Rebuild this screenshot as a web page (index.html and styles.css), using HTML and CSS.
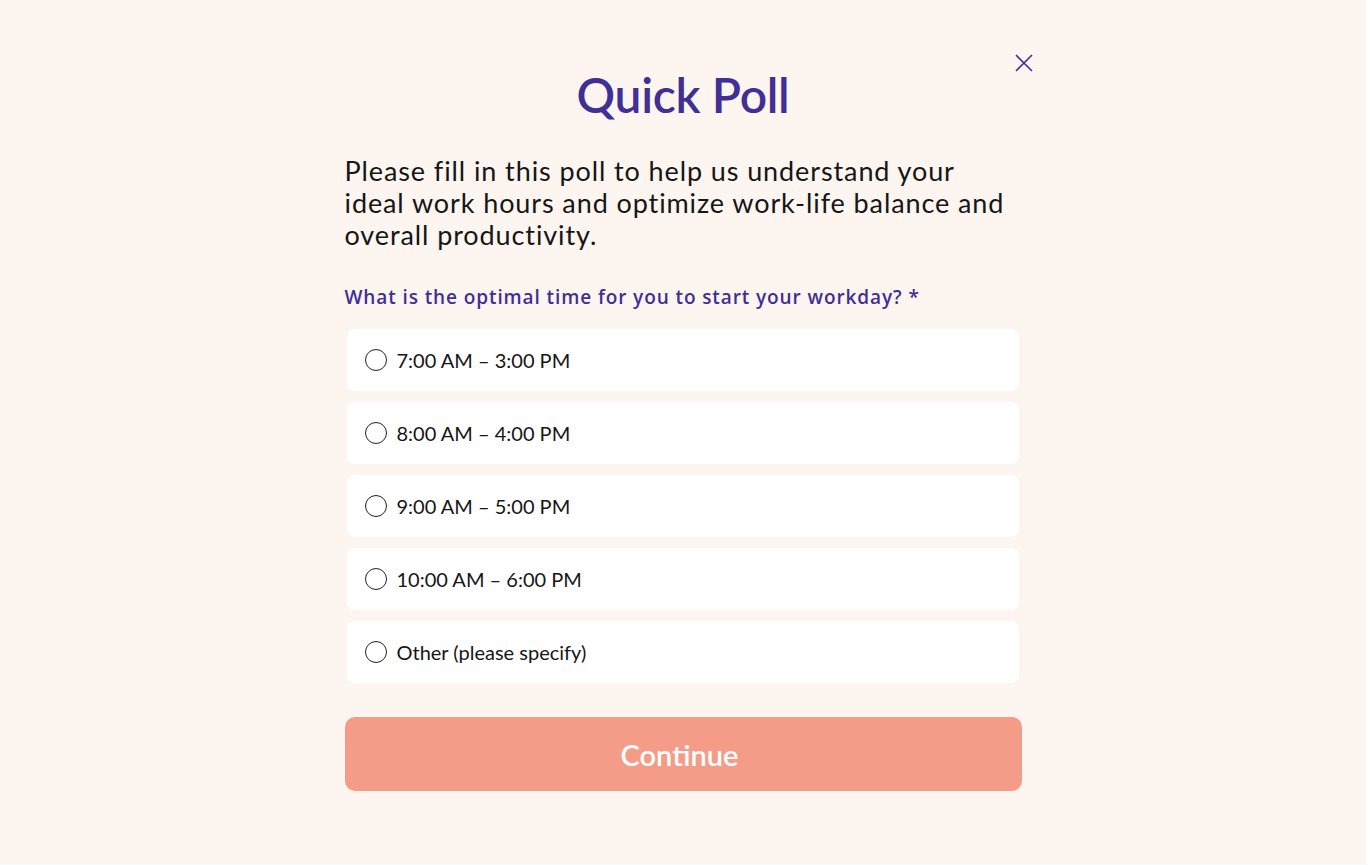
FILE: index.html
```html
<!DOCTYPE html>
<html lang="en">

<head>
    <meta charset="UTF-8">
    <meta name="viewport" content="width=device-width, initial-scale=1.0">
    <title>Quick Poll</title>
    <link rel="stylesheet" href="styles.css">
</head>

<body>
    <div class="poll_main">
        <button type="button" class="poll_close" aria-label="Close">
            <svg width="18" height="18" viewBox="0 0 18 18">
                <path d="M1 1L17 17M17 1L1 17" stroke="#3f2f96" stroke-width="1.6" fill="none" />
            </svg>
        </button>

        <h1>Quick Poll</h1>

        <p class="poll_intro">
            Please fill in this poll to help us understand your
            ideal work hours and optimize work-life balance and
            overall productivity.
        </p>

        <form class="poll_form">
            <h2>What is the optimal time for you to start your workday? *</h2>

            <label class="poll_option">
                <input type="radio" name="start" value="7">
                <span class="radio_circle"></span>
                <span>7:00 AM – 3:00 PM</span>
            </label>
            <label class="poll_option">
                <input type="radio" name="start" value="8">
                <span class="radio_circle"></span>
                <span>8:00 AM – 4:00 PM</span>
            </label>
            <label class="poll_option">
                <input type="radio" name="start" value="9">
                <span class="radio_circle"></span>
                <span>9:00 AM – 5:00 PM</span>
            </label>
            <label class="poll_option">
                <input type="radio" name="start" value="10">
                <span class="radio_circle"></span>
                <span>10:00 AM – 6:00 PM</span>
            </label>
            <label class="poll_option">
                <input type="radio" name="start" value="other">
                <span class="radio_circle"></span>
                <span>Other (please specify)</span>
            </label>

            <button type="button" class="poll_continue">Continue</button>
        </form>
    </div>
</body>

</html>
```

FILE: styles.css
```css
/* 기본 설정 */
* {
    box-sizing: border-box;
    margin: 0;
    padding: 0;
}

html,
body {
    width: 100%;
    height: 100%;
    background-color: #fdf5f0;
    color: #161616;
    font-family: Lato, "Open Sans", sans-serif;
}

/* 메인 */
.poll_main {
    position: relative;
    width: 677px;
    margin: 0 auto;
    padding-top: 66px;
}

.poll_close {
    position: absolute;
    top: 54px;
    right: -11px;
    background: none;
    border: none;
    cursor: pointer;
    line-height: 0;
}

h1 {
    font-size: 48px;
    line-height: 58px;
    font-weight: 600;
    color: #3f2f96;
    text-align: center;
    letter-spacing: -0.3px;
}

.poll_intro {
    max-width: 666px;
    margin-top: 31px;
    font-size: 27px;
    line-height: 32px;
    color: #161616;
    letter-spacing: 0.9px;
}

.poll_form {
    display: flex;
    flex-direction: column;
    margin-top: 33px;
}

h2 {
    font-family: "Open Sans", Lato, sans-serif;
    font-size: 19px;
    line-height: 26px;
    font-weight: 600;
    color: #3f2f96;
    letter-spacing: 0.9px;
    margin-bottom: 19px;
}

/* 선택지 */
.poll_option {
    display: flex;
    align-items: center;
    gap: 10px;
    height: 62px;
    margin: 0 3px 11px 2px;
    padding: 0 18px;
    background-color: #ffffff;
    border-radius: 8px;
    font-size: 20px;
    color: #161616;
    cursor: pointer;
}

.poll_option input {
    display: none;
}

.radio_circle {
    width: 22px;
    height: 22px;
    border: 1.3px solid #222;
    border-radius: 50%;
    flex-shrink: 0;
}

.poll_option input:checked + .radio_circle {
    border: 6px solid #3f2f96;
}

/* 버튼 */
.poll_continue {
    margin-top: 23px;
    height: 74px;
    padding-right: 7px;
    background-color: #f49c88;
    color: #ffffff;
    border: none;
    border-radius: 10px;
    font-family: Lato, "Open Sans", sans-serif;
    font-size: 29px;
    font-weight: 600;
    cursor: pointer;
}
```
